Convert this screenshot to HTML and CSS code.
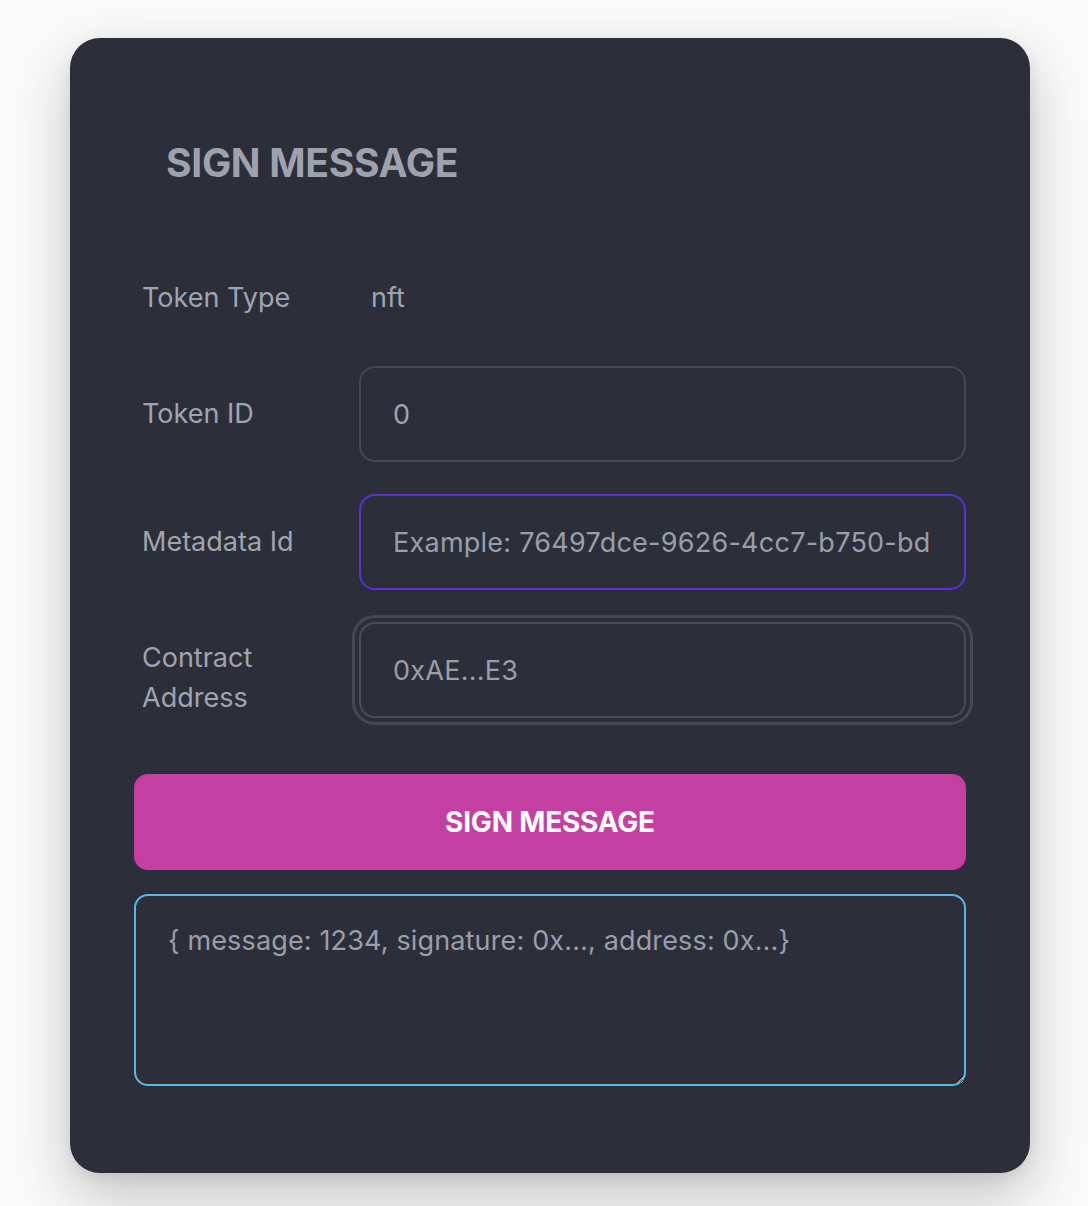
FILE: index.html
```html
<!DOCTYPE html>
<html lang="en">
<head>
<meta charset="utf-8">
<title>Sign Message</title>
<link rel="stylesheet" href="styles.css">
</head>
<body>
<div class="card">
  <h1 class="title">SIGN MESSAGE</h1>
  <div class="form">
    <div class="row row-static">
      <div class="label">Token Type</div>
      <div class="value">nft</div>
    </div>
    <div class="row">
      <label class="label" for="tokenId">Token ID</label>
      <input class="field" id="tokenId" type="text" value="0">
    </div>
    <div class="row">
      <label class="label" for="metaId">Metadata Id</label>
      <input class="field field-purple" id="metaId" type="text" placeholder="Example: 76497dce-9626-4cc7-b750-bd">
    </div>
    <div class="row">
      <label class="label label-narrow" for="contract">Contract Address</label>
      <input class="field field-ring" id="contract" type="text" placeholder="0xAE...E3">
    </div>
  </div>
  <button class="btn" type="button">SIGN MESSAGE</button>
  <textarea class="output" placeholder="{ message: 1234, signature: 0x..., address: 0x...}"></textarea>
</div>
</body>
</html>
```

FILE: styles.css
```css
html, body {
  margin: 0;
  padding: 0;
}
body {
  background: #fafafa;
  font-family: Inter, "Noto Sans", "Liberation Sans", sans-serif;
  width: 1088px;
  height: 1206px;
  overflow: hidden;
}
.card {
  box-sizing: border-box;
  width: 960px;
  height: 1135px;
  margin: 38px 0 0 70px;
  padding: 64px;
  background: #2c2f3a;
  border-radius: 30px;
  box-shadow: 0 24px 60px rgba(0, 0, 0, 0.22), 0 4px 14px rgba(0, 0, 0, 0.08);
  display: flex;
  flex-direction: column;
}
.title {
  margin: 37px 0 0 32px;
  font-size: 39px;
  line-height: 48px;
  font-weight: 700;
  color: #9ea2ae;
  letter-spacing: -0.3px;
}
.form {
  margin-top: 75px;
  display: flex;
  flex-direction: column;
  gap: 32px;
}
.row {
  display: grid;
  grid-template-columns: 225px 1fr;
  align-items: center;
}
.row-static {
  height: 72px;
}
.label {
  padding-left: 8px;
  font-size: 27px;
  line-height: 40px;
  color: #a0a4b0;
}
.label-narrow {
  max-width: 170px;
  margin-top: 16px;
}
.value {
  padding-left: 12px;
  font-size: 27px;
  line-height: 40px;
  color: #a0a4b0;
}
.field {
  box-sizing: border-box;
  width: 100%;
  height: 96px;
  padding: 0 32px;
  margin: 0;
  background: #2c2f3a;
  border: 2px solid #444854;
  border-radius: 16px;
  font-family: inherit;
  font-size: 27px;
  letter-spacing: 0.25px;
  color: #a0a4b0;
  outline: none;
}
.field::placeholder {
  color: #9a9ea9;
  opacity: 1;
}
.field-purple {
  border-color: #5a31d9;
}
.field-ring {
  border-color: #4a4e5a;
  outline: 3px solid #444853;
  outline-offset: 4px;
}
.btn {
  margin-top: 56px;
  height: 96px;
  width: 100%;
  border: none;
  border-radius: 14px;
  background: #c43fa2;
  color: #ffffff;
  font-family: inherit;
  font-size: 28px;
  font-weight: 700;
  letter-spacing: -0.2px;
}
.output {
  box-sizing: border-box;
  margin-top: 24px;
  width: 100%;
  height: 192px;
  padding: 25px 32px;
  background: #2c2f3a;
  border: 2px solid #5ab6ea;
  border-radius: 14px;
  font-family: inherit;
  font-size: 27px;
  line-height: 40px;
  letter-spacing: 0.15px;
  color: #a0a4b0;
  outline: none;
  resize: vertical;
}
.output::placeholder {
  color: #9a9ea9;
  opacity: 1;
}
```
